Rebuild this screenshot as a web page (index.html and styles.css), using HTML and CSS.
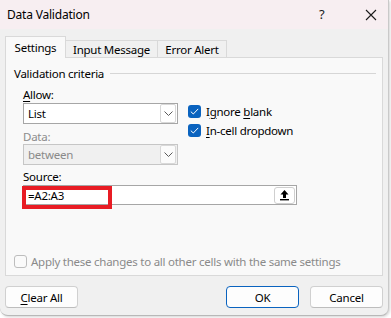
FILE: index.html
```html
<!DOCTYPE html>
<html lang="en">
<head>
<meta charset="utf-8">
<title>Data Validation</title>
<link rel="stylesheet" href="styles.css">
</head>
<body>
<div class="dialog">
  <div class="titlebar">
    <span class="title">Data Validation</span>
    <span class="help">?</span>
    <svg class="close" width="12" height="12" viewBox="0 0 12 12"><path d="M1 1L11 11M11 1L1 11" stroke="#1a1a1a" stroke-width="1.1" fill="none"/></svg>
  </div>
  <div class="tabs">
    <div class="tab active tab-settings">Settings</div>
    <div class="tab tab-input">Input Message</div>
    <div class="tab tab-error">Error Alert</div>
  </div>
  <div class="panel">
    <div class="group-title"><span>Validation criteria</span><div class="rule"></div></div>
    <div class="criteria">
      <div class="left-col">
        <div class="label"><u>A</u>llow:</div>
        <div class="select">
          <span class="value">List</span>
          <div class="arrow"><svg width="9" height="5" viewBox="0 0 9 5"><path d="M0.5 0.5L4.5 4.5L8.5 0.5" stroke="#5a5a5a" fill="none"/></svg></div>
        </div>
        <div class="label disabled lbl-data">Data:</div>
        <div class="select disabled">
          <span class="value">between</span>
          <div class="arrow"><svg width="9" height="5" viewBox="0 0 9 5"><path d="M0.5 0.5L4.5 4.5L8.5 0.5" stroke="#5a5a5a" fill="none"/></svg></div>
        </div>
      </div>
      <div class="right-col">
        <div class="check">
          <span class="box checked"><svg width="9" height="7" viewBox="0 0 9 7"><path d="M0.8 3.6L3.3 6L8.2 0.9" stroke="#fff" stroke-width="1" fill="none"/></svg></span>
          <span>I<u>g</u>nore <u>b</u>lank</span>
        </div>
        <div class="check">
          <span class="box checked"><svg width="9" height="7" viewBox="0 0 9 7"><path d="M0.8 3.6L3.3 6L8.2 0.9" stroke="#fff" stroke-width="1" fill="none"/></svg></span>
          <span><u>I</u>n-cell dropdown</span>
        </div>
      </div>
    </div>
    <div class="source-block">
      <div class="label lbl-source">Source:</div>
      <div class="source">
        <span class="value">=A2:A3</span>
        <div class="collapse"><svg width="11" height="12" viewBox="0 0 11 12"><path d="M5.5 1L1.5 5.5H4V9H7V5.5H9.5Z" fill="#000"/><rect x="1" y="10" width="9" height="1.4" fill="#000"/></svg></div>
        <div class="highlight"></div>
      </div>
    </div>
    <div class="apply">
      <span class="box empty"></span>
      <span>Apply these changes to all other cells with the same settings</span>
    </div>
  </div>
  <div class="buttons">
    <div class="btn"><u>C</u>lear All</div>
    <div class="spacer"></div>
    <div class="btn primary">OK</div>
    <div class="btn">Cancel</div>
  </div>
</div>
</body>
</html>
```

FILE: styles.css
```css
* { box-sizing: border-box; }
html, body { margin: 0; padding: 0; }
body {
  background: #ffffff;
  font-family: "Noto Sans", "Open Sans", sans-serif;
  font-size: 11.5px;
  letter-spacing: -0.25px;
  line-height: 15px;
  color: #000;
  width: 391px;
  height: 318px;
  overflow: hidden;
}
u { text-decoration: underline; text-underline-offset: 2px; text-decoration-thickness: 1px; }
.dialog {
  width: 389px;
  height: 316px;
  background: #f0f0f0;
  border-right: 1px solid #c9c9c9;
  border-bottom: 1px solid #b8b8b8;
  border-bottom-right-radius: 8px;
  border-bottom-left-radius: 8px;
  box-shadow: 1px 1px 3px rgba(0,0,0,0.18);
}
.titlebar {
  height: 29px;
  background: #f7eef1;
  display: flex;
  align-items: center;
  padding-left: 7px;
}
.title { flex: 1; font-size: 12px; letter-spacing: -0.2px; }
.help { font-size: 13px; width: 14px; margin-right: 32px; color: #1a1a1a; }
.close { margin-right: 11px; }
.tabs {
  display: flex;
  align-items: flex-end;
  margin-top: 7px;
  margin-left: 5px;
  height: 21px;
  position: relative;
  z-index: 2;
}
.tab {
  height: 17px;
  border: 1px solid #d9d9d9;
  border-bottom: none;
  border-left: none;
  background: #f0f0f0;
  display: flex;
  align-items: center;
  justify-content: center;
  padding-top: 1px;
}
.tab.active {
  height: 22px;
  margin-bottom: -1px;
  border-left: 1px solid #d9d9d9;
  background: #f9f9f9;
  padding-top: 0;
}
.tab-settings { width: 61px; }
.tab-input { width: 92px; }
.tab-error { width: 69px; }
.panel {
  margin-left: 5px;
  width: 378px;
  height: 219px;
  background: #f9f9f9;
  border: 1px solid #d9d9d9;
  position: relative;
  z-index: 1;
  padding-left: 8px;
  padding-right: 6px;
}
.group-title {
  display: flex;
  align-items: center;
  margin-top: 8px;
  height: 15px;
}
.rule { flex: 1; height: 1px; background: #d6d6d6; margin-left: 6px; }
.criteria {
  display: flex;
  padding-left: 9px;
}
.left-col { width: 155px; }
.label { height: 15px; margin-top: 6px; }
.label.disabled { color: #8c8c8c; }
.lbl-data { margin-top: 5px; }
.select {
  height: 21px;
  margin-top: 1px;
  background: #fff;
  border: 1px solid #a6a6a6;
  display: flex;
  align-items: center;
  justify-content: space-between;
  padding: 0 1px 0 4px;
}
.select.disabled {
  margin-top: 0;
  background: #f0f0f0;
  border-color: #c6c6c6;
  color: #8a8a8a;
}
.arrow {
  width: 16px;
  height: 19px;
  border: 1px solid #d8d8d8;
  border-radius: 2px;
  background: #fff;
  display: flex;
  align-items: center;
  justify-content: center;
}
.select.disabled .arrow { background: #fbfbfb; }
.right-col {
  margin-left: 10px;
  padding-top: 23px;
}
.check {
  display: flex;
  align-items: center;
  height: 14px;
  margin-top: 0;
  margin-bottom: 5px;
}
.box {
  width: 13px;
  height: 13px;
  border-radius: 3px;
  margin-right: 5px;
  display: flex;
  align-items: center;
  justify-content: center;
  flex: none;
}
.box.checked { background: #0a63bf; }
.box.empty { border: 1px solid #bdbdbd; background: #fafafa; margin-right: 4px; }
.source-block { padding-left: 9px; }
.lbl-source { margin-top: 4px; }
.source {
  position: relative;
  width: 274px;
  height: 20px;
  margin-top: 1px;
  background: #fff;
  border: 1px solid #a6a6a6;
  display: flex;
  align-items: center;
  justify-content: space-between;
  padding: 0 1px 0 4px;
}
.collapse {
  width: 21px;
  height: 17px;
  border: 1px solid #cfcfcf;
  border-radius: 3px;
  background: #fff;
  display: flex;
  align-items: center;
  justify-content: center;
}
.highlight {
  position: absolute;
  left: -2px;
  top: 0px;
  width: 90px;
  height: 23px;
  border: 4px solid #e81c24;
}
.apply {
  display: flex;
  align-items: center;
  margin-top: 49px;
  color: #8a8a8a;
}
.buttons {
  display: flex;
  margin-top: 10px;
  padding-left: 5px;
  padding-right: 5px;
  gap: 11px;
}
.spacer { flex: 1; }
.btn {
  width: 73px;
  height: 22px;
  background: #fdfdfd;
  border: 1px solid #d0d0d0;
  border-bottom-color: #bdbdbd;
  border-radius: 4px;
  display: flex;
  align-items: center;
  justify-content: center;
}
.btn.primary { border: 1px solid #0a63bf; }
```
